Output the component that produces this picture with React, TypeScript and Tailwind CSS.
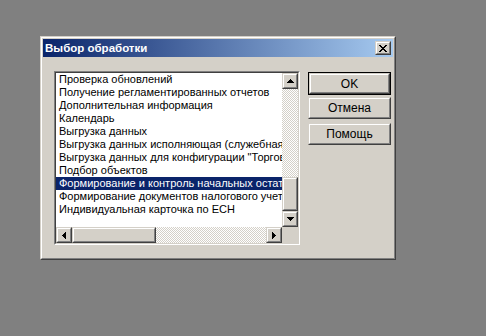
import React from "react";

const outerRaised =
  "border border-t-[#d4d0c8] border-l-[#d4d0c8] border-r-[#404040] border-b-[#404040]";
const innerRaised =
  "border border-t-white border-l-white border-r-[#808080] border-b-[#808080]";

function Raised({
  className = "",
  children,
}: {
  className?: string;
  children?: React.ReactNode;
}) {
  return (
    <div className={`${outerRaised} bg-[#d4d0c8] ${className}`}>
      <div
        className={`${innerRaised} w-full h-full flex items-center justify-center bg-[#d4d0c8]`}
      >
        {children}
      </div>
    </div>
  );
}

function Pix({
  w,
  h,
  rects,
}: {
  w: number;
  h: number;
  rects: [number, number, number, number][];
}) {
  return (
    <svg width={w} height={h} viewBox={`0 0 ${w} ${h}`} shapeRendering="crispEdges">
      {rects.map((r, i) => (
        <rect key={i} x={r[0]} y={r[1]} width={r[2]} height={r[3]} fill="#000" />
      ))}
    </svg>
  );
}

const upArrow: [number, number, number, number][] = [
  [3, 0, 1, 1],
  [2, 1, 3, 1],
  [1, 2, 5, 1],
  [0, 3, 7, 1],
];
const downArrow: [number, number, number, number][] = [
  [0, 0, 7, 1],
  [1, 1, 5, 1],
  [2, 2, 3, 1],
  [3, 3, 1, 1],
];
const leftArrow: [number, number, number, number][] = [
  [0, 3, 1, 1],
  [1, 2, 1, 3],
  [2, 1, 1, 5],
  [3, 0, 1, 7],
];
const rightArrow: [number, number, number, number][] = [
  [0, 0, 1, 7],
  [1, 1, 1, 5],
  [2, 2, 1, 3],
  [3, 3, 1, 1],
];
const xGlyph: [number, number, number, number][] = [
  [0, 0, 2, 1],
  [6, 0, 2, 1],
  [1, 1, 2, 1],
  [5, 1, 2, 1],
  [2, 2, 4, 1],
  [3, 3, 2, 1],
  [2, 4, 4, 1],
  [1, 5, 2, 1],
  [5, 5, 2, 1],
  [0, 6, 2, 1],
  [6, 6, 2, 1],
];

const items = [
  "Проверка обновлений",
  "Получение регламентированных отчетов",
  "Дополнительная информация",
  "Календарь",
  "Выгрузка данных",
  "Выгрузка данных исполняющая (служебная)",
  "Выгрузка данных для конфигурации \"Торговля и склад\"",
  "Подбор объектов",
  "Формирование и контроль начальных остатков",
  "Формирование документов налогового учета",
  "Индивидуальная карточка по ЕСН",
];

const checker =
  "bg-[repeating-conic-gradient(#d4d0c8_0%_25%,#ffffff_0%_50%)] bg-[length:2px_2px]";

export default function App() {
  return (
    <div
      className="w-[486px] h-[336px] bg-[#808080] pl-[40px] pt-[36px]"
      style={{ fontFamily: "'Liberation Sans', Arial, sans-serif" }}
    >
      <div className={`w-[356px] h-[224px] ${outerRaised}`}>
        <div className={`w-full h-full ${innerRaised} bg-[#d4d0c8] p-[1px] flex flex-col`}>
          {/* Title bar */}
          <div className="h-[18px] flex items-center justify-between pl-[2px] pr-[2px] bg-[linear-gradient(to_right,#0a246a,#a6caf0)]">
            <span className="text-white font-bold text-[11.5px] leading-[18px]">
              Выбор обработки
            </span>
            <Raised className="w-[16px] h-[14px]">
              <Pix w={8} h={7} rects={xGlyph} />
            </Raised>
          </div>
          {/* Body */}
          <div className="flex flex-1 pl-[11px]">
            {/* List box */}
            <div className="mt-[14px] w-[246px] h-[174px] border border-t-[#808080] border-l-[#808080] border-r-white border-b-white">
              <div className="w-full h-full border border-t-[#404040] border-l-[#404040] border-r-[#d4d0c8] border-b-[#d4d0c8] flex flex-col">
                <div className="flex flex-1 min-h-0">
                  <div className="flex-1 min-w-0 bg-white overflow-hidden text-[11px] text-black">
                    {items.map((t, i) => (
                      <div
                        key={i}
                        className={`h-[13px] leading-[13px] pl-[3px] whitespace-nowrap ${
                          i === 8 ? "bg-[#0a246a] text-white" : ""
                        }`}
                      >
                        {t}
                      </div>
                    ))}
                  </div>
                  <div className="w-[16px] flex flex-col">
                    <Raised className="w-[16px] h-[16px]">
                      <Pix w={7} h={4} rects={upArrow} />
                    </Raised>
                    <div className={`flex-1 flex flex-col justify-end ${checker}`}>
                      <Raised className="w-[16px] h-[34px]" />
                    </div>
                    <Raised className="w-[16px] h-[16px]">
                      <Pix w={7} h={4} rects={downArrow} />
                    </Raised>
                  </div>
                </div>
                <div className="h-[16px] flex">
                  <Raised className="w-[16px] h-[16px]">
                    <Pix w={4} h={7} rects={leftArrow} />
                  </Raised>
                  <div className={`flex-1 flex ${checker}`}>
                    <Raised className="w-[84px] h-[16px]" />
                  </div>
                  <Raised className="w-[16px] h-[16px]">
                    <Pix w={4} h={7} rects={rightArrow} />
                  </Raised>
                  <div className="w-[16px] h-[16px] bg-[#d4d0c8]" />
                </div>
              </div>
            </div>
            {/* Buttons */}
            <div className="ml-[8px] flex flex-col text-[12px] text-black">
              <div className="mt-[15px] w-[83px] h-[23px] border border-black">
                <Raised className="w-full h-full">OK</Raised>
              </div>
              <Raised className="mt-[2px] w-[83px] h-[22px]">Отмена</Raised>
              <Raised className="mt-[4px] w-[83px] h-[22px]">Помощь</Raised>
            </div>
          </div>
        </div>
      </div>
    </div>
  );
}
